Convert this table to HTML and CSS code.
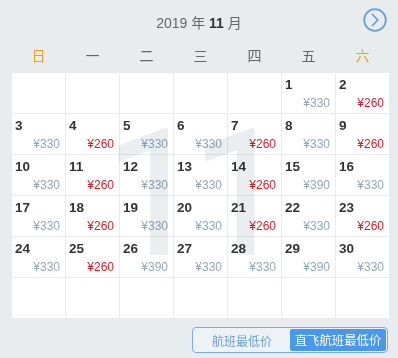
FILE: index.html
```html
<!DOCTYPE html>
<html lang="zh">
<head>
<meta charset="utf-8">
<link rel="stylesheet" href="styles.css">
</head>
<body>
<div class="cal">
  <div class="head">
    <div class="title">2019 年 <b>11</b> 月</div>
    <button class="next" aria-label="下个月">
      <svg width="24" height="24" viewBox="0 0 24 24"><circle cx="12" cy="12" r="10.8" fill="none" stroke="#6a9fd8" stroke-width="1.8"/><path d="M9.5 6.5 L14.8 12 L9.5 17.5" fill="none" stroke="#6a9fd8" stroke-width="1.8" stroke-linecap="round" stroke-linejoin="round"/></svg>
    </button>
  </div>
  <div class="week">
    <span class="we">日</span><span>一</span><span>二</span><span>三</span><span>四</span><span>五</span><span class="we">六</span>
  </div>
  <div class="gridwrap" data-month="11">
    <div class="grid">
      <div class="cell"></div><div class="cell"></div><div class="cell"></div><div class="cell"></div><div class="cell"></div>
      <div class="cell"><span class="d">1</span><span class="p">¥330</span></div>
      <div class="cell"><span class="d">2</span><span class="p low">¥260</span></div>
      <div class="cell"><span class="d">3</span><span class="p">¥330</span></div>
      <div class="cell"><span class="d">4</span><span class="p low">¥260</span></div>
      <div class="cell"><span class="d">5</span><span class="p">¥330</span></div>
      <div class="cell"><span class="d">6</span><span class="p">¥330</span></div>
      <div class="cell"><span class="d">7</span><span class="p low">¥260</span></div>
      <div class="cell"><span class="d">8</span><span class="p">¥330</span></div>
      <div class="cell"><span class="d">9</span><span class="p low">¥260</span></div>
      <div class="cell"><span class="d">10</span><span class="p">¥330</span></div>
      <div class="cell"><span class="d">11</span><span class="p low">¥260</span></div>
      <div class="cell"><span class="d">12</span><span class="p">¥330</span></div>
      <div class="cell"><span class="d">13</span><span class="p">¥330</span></div>
      <div class="cell"><span class="d">14</span><span class="p low">¥260</span></div>
      <div class="cell"><span class="d">15</span><span class="p">¥390</span></div>
      <div class="cell"><span class="d">16</span><span class="p">¥330</span></div>
      <div class="cell"><span class="d">17</span><span class="p">¥330</span></div>
      <div class="cell"><span class="d">18</span><span class="p low">¥260</span></div>
      <div class="cell"><span class="d">19</span><span class="p">¥330</span></div>
      <div class="cell"><span class="d">20</span><span class="p">¥330</span></div>
      <div class="cell"><span class="d">21</span><span class="p low">¥260</span></div>
      <div class="cell"><span class="d">22</span><span class="p">¥330</span></div>
      <div class="cell"><span class="d">23</span><span class="p low">¥260</span></div>
      <div class="cell"><span class="d">24</span><span class="p">¥330</span></div>
      <div class="cell"><span class="d">25</span><span class="p low">¥260</span></div>
      <div class="cell"><span class="d">26</span><span class="p">¥390</span></div>
      <div class="cell"><span class="d">27</span><span class="p">¥330</span></div>
      <div class="cell"><span class="d">28</span><span class="p">¥330</span></div>
      <div class="cell"><span class="d">29</span><span class="p">¥390</span></div>
      <div class="cell"><span class="d">30</span><span class="p">¥330</span></div>
      <div class="cell"></div><div class="cell"></div><div class="cell"></div><div class="cell"></div><div class="cell"></div><div class="cell"></div><div class="cell"></div>
    </div>
  </div>
  <div class="foot">
    <div class="toggle">
      <span class="opt">航班最低价</span>
      <span class="opt on">直飞航班最低价</span>
    </div>
  </div>
</div>
</body>
</html>
```
FILE: styles.css
```css
html, body {
  margin: 0;
  padding: 0;
  background: #e8ecee;
}
body {
  font-family: "Liberation Sans", "Noto Sans CJK SC", sans-serif;
  width: 398px;
  height: 358px;
  overflow: hidden;
}
.cal {
  position: relative;
}
.head {
  position: relative;
  height: 40px;
  display: flex;
  align-items: center;
  justify-content: center;
}
.title {
  font-size: 14px;
  color: #666;
  padding-top: 4px;
}
.title b {
  color: #333;
  font-weight: bold;
}
.next {
  position: absolute;
  right: 11px;
  top: 8px;
  width: 24px;
  height: 24px;
  padding: 0;
  border: 0;
  background: none;
  display: block;
}
.next svg { display: block; }
.week {
  display: grid;
  grid-template-columns: repeat(7, 53px);
  column-gap: 1px;
  margin-left: 12px;
  height: 30px;
  align-items: center;
  font-size: 14px;
  color: #666;
}
.week span {
  text-align: center;
}
.week .we {
  color: #f0a020;
}
.gridwrap {
  position: relative;
  margin: 3px 0 0 12px;
  width: 377px;
}
.gridwrap::after {
  content: attr(data-month);
  position: absolute;
  left: 93px;
  top: 35px;
  white-space: nowrap;
  font-family: Roboto, "Open Sans", sans-serif;
  font-size: 174px;
  line-height: 174px;
  letter-spacing: -11px;
  color: #ebeef0;
  -webkit-text-stroke: 2px #ebeef0;
  mix-blend-mode: multiply;
  pointer-events: none;
}
.grid {
  display: grid;
  grid-template-columns: repeat(7, 53px);
  grid-auto-rows: 40px;
  gap: 1px;
}
.cell {
  background: #fff;
  display: flex;
  flex-direction: column;
  justify-content: space-between;
  padding: 4px 5px 3px 3px;
  box-sizing: border-box;
}
.d {
  font-size: 13.5px;
  font-weight: bold;
  color: #333;
  line-height: 16px;
}
.p {
  font-size: 12px;
  line-height: 14px;
  color: #8ea8bc;
  text-align: right;
}
.p.low {
  color: #c8242a;
}
.foot {
  display: flex;
  justify-content: flex-end;
  padding: 9px 10px 0 0;
}
.toggle {
  display: flex;
  width: 196px;
  height: 26px;
  box-sizing: border-box;
  border: 1px solid #7aaee6;
  border-radius: 4px;
  padding: 1px;
  background: #edf2f6;
}
.opt {
  flex: 1;
  display: flex;
  align-items: center;
  justify-content: center;
  font-size: 12px;
  color: #6a9fd8;
}
.opt.on {
  flex: 0 0 96px;
  background: #4a97ee;
  color: #fff;
  border-radius: 2px;
  font-size: 12.4px;
}
```
